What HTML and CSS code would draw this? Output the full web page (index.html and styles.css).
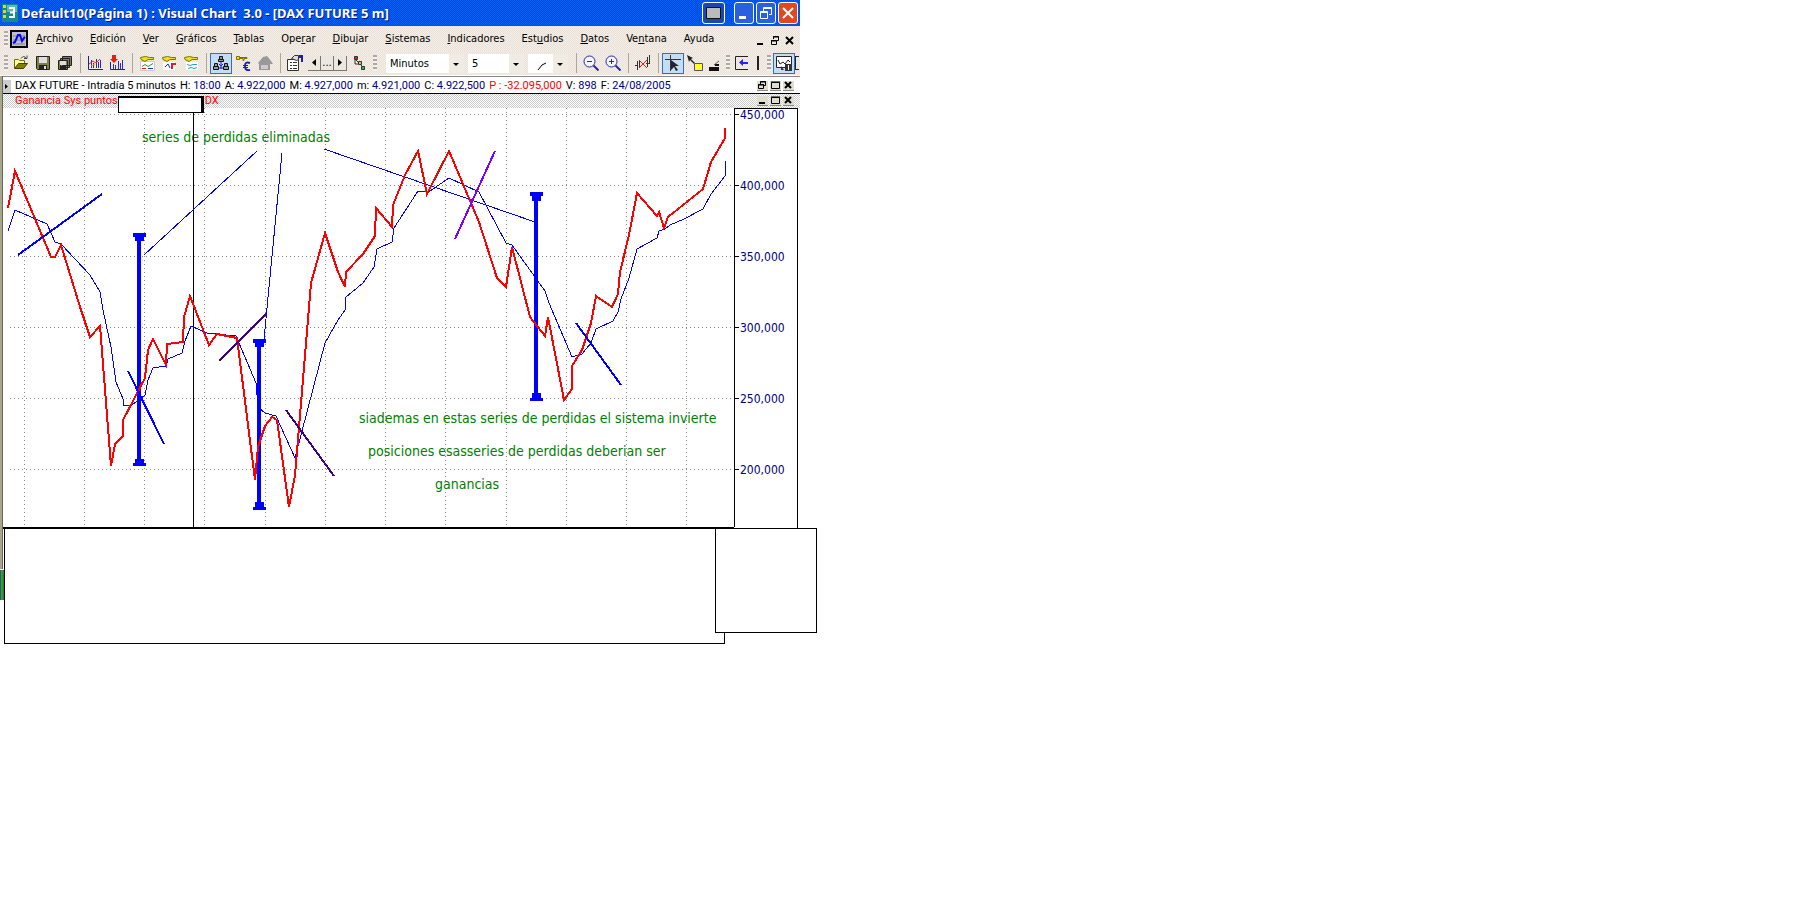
FILE: index.html
```html
<!DOCTYPE html>
<html lang="es">
<head>
<meta charset="utf-8">
<title>Visual Chart 3.0</title>
<link rel="stylesheet" href="styles.css">
</head>
<body>
<main class="desktop">
<section class="window">
  <header class="titlebar">
    <svg class="app-icon" width="16" height="18" viewBox="0 0 16 18"><path fill="#188890" d="M0 0h16v18H0z"/><path fill="#60b8b0" d="M5 1h10v7H5z"/><path fill="#e8d040" d="M1 1h3v3H1zM1 6h3v3H1zM1 11h3v3H1z"/><path fill="none" stroke="#fff" stroke-width="2" d="M7 4h5v9H7M8 8.500h4"/></svg>
    <h1 class="title">Default10(Página 1) : Visual Chart  3.0 - [DAX FUTURE 5 m]</h1>
    <button class="cap cap-extra" aria-label="Monitor"><svg width="21" height="20"><path fill="#bbb" stroke="#111" d="M3.500 4.500h14v11h-14z"/></svg></button>
    <button class="cap" aria-label="Minimizar"><svg width="18" height="20"><path fill="#fff" d="M4 13h7v3H4z"/></svg></button>
    <button class="cap" aria-label="Restaurar"><svg width="18" height="20"><path fill="none" stroke="#fff" d="M6.500 8V4.500h8v7H12M6 5.500h9"/><path fill="none" stroke="#fff" d="M3.500 8.500h7v7h-7zM3 9.500h8"/></svg></button>
    <button class="cap cap-close" aria-label="Cerrar"><svg width="18" height="20"><path stroke="#fff" stroke-width="2" d="M4 5l10 10M14 5L4 15"/></svg></button>
  </header>

  <nav class="menubar">
    <i class="grip"></i>
    <svg class="doc-icon" width="18" height="18" viewBox="0 0 18 18"><path fill="#bdbdd0" stroke="#000" stroke-width="2" d="M1 1h16v16H1z"/><path fill="none" stroke="#808090" d="M3 6h12M3 10h12M3 14h12"/><path fill="none" stroke="#00f" stroke-width="2" d="M3 13l2-1 3-7 2 0 2 6 2-3 1-1"/></svg>
    <button><u>A</u>rchivo</button><button><u>E</u>dición</button><button><u>V</u>er</button><button><u>G</u>ráficos</button><button><u>T</u>ablas</button><button>Ope<u>r</u>ar</button><button><u>D</u>ibujar</button><button><u>S</u>istemas</button><button><u>I</u>ndicadores</button><button>Est<u>u</u>dios</button><button><u>D</u>atos</button><button>Ve<u>n</u>tana</button><button>Ayuda</button>
    <span class="mdi">
      <button aria-label="Minimizar documento"><svg width="12" height="12"><path d="M3 8h6v2H3z"/></svg></button>
      <button aria-label="Restaurar documento"><svg width="12" height="12"><path fill="none" stroke="#000" d="M4.500 4V1.500h5v4H8M4 2h6M2.500 5.500h5v4h-5zM2 6h6"/></svg></button>
      <button aria-label="Cerrar documento"><svg width="12" height="12"><path stroke="#000" stroke-width="2" d="M2 2l7 7M9 2L2 9"/></svg></button>
    </span>
  </nav>

  <div class="toolbar">
    <i class="grip"></i>
    <button class="tool" aria-label="Abrir"><svg width="16" height="16"><path fill="#ffff90" stroke="#707000" d="M1.500 13V4.500h4l1 1h5V8"/><path fill="#808000" stroke="#404000" d="M1.500 13.500l4-5h9l-4 5z"/><path fill="none" stroke="#444" d="M8 3.500q3-4 5 0M11 3.500h3v-3"/></svg></button>
    <button class="tool" aria-label="Guardar"><svg width="16" height="16"><path fill="#808040" stroke="#222" d="M1.500 1.500h13v13h-12l-1-1z"/><path fill="#ddd" d="M4 2h8v6H4z"/><path fill="#222" d="M4 10h8v4H4z"/><path fill="#ddd" d="M9 11h2v3H9z"/></svg></button>
    <button class="tool" aria-label="Guardar todo"><svg width="16" height="16"><path fill="#808040" stroke="#222" d="M5.500 1.500h9v9h-9zM3.500 3.500h9v9h-9zM1.500 5.500h9v9h-9z"/><path fill="#ddd" d="M3 6h6v4H3z"/><path fill="#222" d="M3 11h6v3H3z"/></svg></button>
    <i class="sep"></i>
    <button class="tool" aria-label="Gráfico"><svg width="16" height="16"><path fill="none" stroke="#2020a0" d="M1.500 1v13.500H16"/><path stroke="#2828b0" d="M4.500 5v8M6.500 8v5M9.500 4v9M11.500 7v6M13.500 5v8"/><path fill="none" stroke="#e03020" d="M2 9l4-3 3 2 4-4"/><path stroke="#e0a020" d="M4 11l4-2"/></svg></button>
    <button class="tool" aria-label="Nuevo gráfico"><svg width="16" height="16"><path fill="none" stroke="#2020a0" d="M1.500 7v7.500H16"/><path stroke="#3030c0" d="M4.500 9v5M6.500 10v4M9.500 6v8M11.500 8v6M13.500 5v9"/><path fill="#e02010" d="M3 0h4v4h2L5 8 1 4h2z"/></svg></button>
    <i class="sep"></i>
    <button class="tool" aria-label="Sistema"><svg width="16" height="16"><path fill="#fff" stroke="#ccc" d="M1.500 6.500h14v9h-14z"/><path fill="#f0e020" stroke="#777700" d="M1.500 2.500l5-1 4 1h4v2H9l-3 2-4-2z"/><path fill="none" stroke="#20a020" d="M3 11.500l3-2 3 2 5-3"/><path stroke="#22f" d="M9 13.500h5"/><path stroke="#e02020" d="M3 13.500h4"/></svg></button>
    <button class="tool" aria-label="Estrategia"><svg width="16" height="16"><path fill="#fff" d="M2 7h12v8H2z"/><path fill="#f0e020" stroke="#777700" d="M1.500 2.500l5-1 4 1h4v2H9l-3 2-4-2z"/><path fill="none" stroke="#22f" d="M4 12l3-3 2 4"/><path fill="none" stroke="#e02020" stroke-width="2" d="M11 14V9h4"/></svg></button>
    <button class="tool" aria-label="Indicador"><svg width="16" height="16"><path fill="#fff" d="M3 7h12v8H3z"/><path fill="#f0e020" stroke="#777700" d="M1.500 2.500l5-1 4 1h4v2H9l-3 2-4-2z"/><path fill="none" stroke="#20a0d0" d="M4 9.500l3 1 3-1 4 0M5 13.500l3-1 3 1 3-1"/></svg></button>
    <i class="sep"></i>
    <button class="tool on" aria-label="Organizar"><svg width="16" height="16"><g fill="#999" stroke="#111"><path d="M6.500 1.500h3v3h-3zM5.500 6.500v-2h5v2zM1.500 8.500h3v3h-3zM.5 14.500v-3h5v3zM11.500 8.500h3v3h-3zM10.500 14.500v-3h5v3z"/></g><path stroke="#22c" fill="none" d="M8 7v7M6 9l2 2 2-2M6 13h4"/></svg></button>
    <button class="tool" aria-label="Comisiones"><svg width="16" height="16"><path fill="#f0e020" stroke="#807000" d="M1.500 1.500h3v3h-3zM5 2.500h7v1H9v2H8v-2H5z"/><path fill="none" stroke="#2020b0" stroke-width="2" d="M15 8q-5-2-5 3t5 4"/><path stroke="#2020b0" d="M8 10.500h5M8 12.500h5"/></svg></button>
    <button class="tool" aria-label="Importar"><svg width="16" height="16"><path fill="#999" d="M1 8l5-6 4-1 4 5 2 3h-3v6H2V9z"/><path fill="#ccc" d="M4 10h7v4H4z"/></svg></button>
    <i class="sep"></i>
    <button class="tool" aria-label="Propiedades"><svg width="16" height="16"><path fill="#fff" stroke="#333" d="M.5 4.500h11v11H.5zM3 7.500h2M6 7.500h4M3 10.500h2M6 10.500h4M3 13.500h2M6 13.500h4"/><path fill="#ddd" stroke="#333" d="M4.500 3.500l3-3h4v4l-2 1z"/><path fill="#2020b0" d="M12 0h4v7h-2V3h-2z"/></svg></button>
    <span class="pager"><button aria-label="Anterior"><svg width="12" height="12"><path d="M8 2v7L4 5.500z"/></svg></button><button>...</button><button aria-label="Siguiente"><svg width="12" height="12"><path d="M4 2v7l4-3.500z"/></svg></button></span>
    <button class="tool" aria-label="Conexión"><svg width="16" height="16"><path stroke="#333" d="M3 4l9 9M3 5v4h3" fill="none"/><path fill="#e02020" stroke="#333" d="M2.500 1.500h3v3h-3z"/><path fill="#e0c020" stroke="#333" d="M6.500 6.500h3v3h-3z"/><path fill="#20c040" stroke="#333" d="M9.500 11.500h3v3h-3z"/></svg></button>
    <i class="grip"></i>
    <span class="combo combo-unit"><select aria-label="Unidad"><option>Minutos</option></select></span>
    <span class="combo combo-num"><select aria-label="Periodo"><option>5</option></select></span>
    <span class="combo combo-line"><select aria-label="Línea"><option></option></select><svg width="10" height="10"><path fill="none" stroke="#000" d="M1 9l4-5 4-2"/></svg></span>
    <i class="sep"></i>
    <button class="tool" aria-label="Alejar"><svg width="16" height="16"><circle cx="6.500" cy="6.500" r="5.500" fill="#f4f4ff" stroke="#2828a0"/><path stroke="#2828a0" d="M4 6.500h5"/><path stroke="#2828a0" stroke-width="2" d="M10.500 10.500l5 5"/></svg></button>
    <button class="tool" aria-label="Acercar"><svg width="16" height="16"><circle cx="6.500" cy="6.500" r="5.500" fill="#f4f4ff" stroke="#2828a0"/><path stroke="#2828a0" d="M4 6.500h5M6.500 4v5"/><path stroke="#2828a0" stroke-width="2" d="M10.500 10.500l5 5"/></svg></button>
    <i class="sep"></i>
    <button class="tool" aria-label="Borrar"><svg width="16" height="16"><path stroke="#333" d="M2.500 6v9M4.500 5v8M0 10.500h3M12.500 2v10M14.500 0v9M11 8.500h3"/><path stroke="#e02020" d="M4 5l8 8M12 5l-8 8"/></svg></button>
    <i class="sep"></i>
    <button class="tool on" aria-label="Cursor"><svg width="16" height="16"><path stroke="#333" d="M0 4.500h16M5.500 0v16"/><path fill="#223" d="M6 5l8 6h-4l3 4-2 1-2-4-3 3z"/></svg></button>
    <button class="tool" aria-label="Seleccionar"><svg width="16" height="16"><path fill="#222" d="M0 0l6 3-2 1 4 4-1 1-4-4-1 2z"/><path fill="#ff3" stroke="#555" d="M7.500 8.500h8v7h-8z"/></svg></button>
    <button class="tool tool-short" aria-label="Grosor"><svg width="16" height="16"><path fill="#111" d="M2 12h10v4H2zM8 9h4v2H8z"/><path stroke="#555" d="M7 10l5-4"/></svg></button>
    <i class="grip"></i>
    <button class="tool tool-short" aria-label="Desplazar"><svg width="16" height="16"><path fill="none" stroke="#222" d="M15 1.500H2.500v13H15"/><path fill="#22f" d="M6 7.500L10 4v3h5v2h-5v2z"/></svg></button>
    <button class="tool tool-narrow" aria-label="Límite"><svg width="4" height="16"><path fill="#222" d="M1 1h2v14H1z"/></svg></button>
    <i class="grip"></i>
    <button class="tool on" aria-label="Panel"><svg width="16" height="16"><path fill="#fff" stroke="#222" d="M.5 1.500h15v11H.5z"/><path fill="none" stroke="#222" d="M2 5l2 4 3-2 2 2 3-4 2 2"/><path fill="#333" d="M9 9h7v7H9zM5 11l3 4H5z"/><path stroke="#fff" d="M12.500 10v5"/></svg></button>
    <i class="clip"></i>
  </div>

  <div class="infobar">
    <button class="expand" aria-label="Expandir"><svg width="8" height="13"><path d="M3 4v5l3-2.500z"/></svg></button>
    <p class="quote"><span>DAX FUTURE - Intradía 5 minutos</span><span>H: <b>18:00</b></span><span>A: <b>4.922,000</b></span><span>M: <b>4.927,000</b></span><span>m: <b>4.921,000</b></span><span>C: <b>4.922,500</b></span><span class="loss">P : -32.095,000</span><span>V: <b>898</b></span><span>F: <b>24/08/2005</b></span></p>
    <span class="mini"><button aria-label="Restaurar"><svg width="11" height="9"><path fill="none" stroke="#000" d="M3.500 3V.5h5v4H7M3 1h6M1.500 3.500h5v4h-5zM1 4h6"/></svg></button><button aria-label="Maximizar"><svg width="11" height="9"><path fill="none" stroke="#000" d="M1.500 1.500h8v6h-8zM1 1h9"/></svg></button><button aria-label="Cerrar"><svg width="11" height="9"><path stroke="#000" stroke-width="2" d="M2 1l6 6M8 1L2 7"/></svg></button></span>
  </div>

  <div class="legend">
    <span>Ganancia Sys puntos</span><span class="mask"></span><span>DX</span>
    <span class="mini"><button aria-label="Minimizar"><svg width="11" height="9"><path d="M2 6h6v2H2z"/></svg></button><button aria-label="Maximizar"><svg width="11" height="9"><path fill="none" stroke="#000" d="M1.500 1.500h8v6h-8zM1 1h9"/></svg></button><button aria-label="Cerrar"><svg width="11" height="9"><path stroke="#000" stroke-width="2" d="M2 1l6 6M8 1L2 7"/></svg></button></span>
  </div>

  <svg class="chart" viewBox="0 108 800 421" role="img" aria-label="Ganancia del sistema">
    <g class="grid">
      <path d="M10 114.500H734M10 185.500H734M10 256.500H734M10 327.500H734M10 398.500H734M10 469.500H734"/>
      <path d="M24.500 108V526M84.500 108V526M144.500 108V526M204.500 108V526M265.500 108V526M325.500 108V526M385.500 108V526M445.500 108V526M506.500 108V526M566.500 108V526M626.500 108V526M686.500 108V526"/>
    </g>
    <path class="frame" d="M734.500 527V108.500H797.500V529M735 114.500h4M735 185.500h4M735 256.500h4M735 327.500h4M735 398.500h4M735 469.500h4"/>
    <path class="base" d="M2 528H734"/>
    <g class="axis"><text x="740" y="119">450,000</text><text x="740" y="190">400,000</text><text x="740" y="261">350,000</text><text x="740" y="332">300,000</text><text x="740" y="403">250,000</text><text x="740" y="474">200,000</text></g>
    <g class="note"><text x="142" y="142">series de perdidas eliminadas</text><text x="359" y="423">siademas en estas series de perdidas el sistema invierte</text><text x="368" y="456">posiciones esasseries de perdidas deberian ser</text><text x="435" y="489">ganancias</text></g>
    <path class="cursor" d="M193.500 108V527"/>
    <polyline class="avg" points="8,231 15,210 47,224 55,242 61,244 90,275 100,292 103,310 111,347 116,382 123,399 124,406 132,405 145,395 148,380 153,368 166,366 168,359 182,353 185,341 191,326 207,333 236,336 256,383 258,407 265,413 276,416 295,458 325,343 338,320 345,310 346,297 363,283 374,267 377,249 392,242 394,228 418,191 430,191 449,178 479,192 506,243 512,245 545,291 549,303 572,357 582,354 591,343 596,329 613,321 618,312 621,299 629,278 637,249 657,238 659,231 665,229 670,225 684,219 703,209 711,194 725,176 725,161"/>
    <path class="thin" d="M144 255L257 151M282 153L267 308L264 340M324 149L535 222"/>
    <g class="range"><path d="M137 237h4v226h-4zM133 233h13v4h-2v4h-9v-4h-2zM135 459h9v4h2v3h-13v-3h2z"/><path d="M257 343h4v164h-4zM253 339h13v4h-2v4h-9v-4h-2zM255 502h9v5h2v3h-13v-3h2z"/><path d="M534 196h4v201h-4zM530 192h13v4h-2v5h-9v-5h-2zM532 393h9v5h2v3h-13v-3h2z"/></g>
    <polyline class="gain" points="8,208 15,171 51,257 55,257 61,245 81,310 90,337 100,326 111,466 115,444 123,436 123,420 145,378 148,350 153,339 166,365 167,344 183,342 184,317 190,296 209,345 217,334 237,338 255,480 258,447 265,426 272,417 277,420 289,507 295,475 311,283 325,233 338,272 345,287 346,272 363,254 375,236 376,208 392,227 393,205 405,175 418,151 427,194 449,151 479,222 497,278 506,287 512,247 530,317 545,336 548,317 564,400 572,389 572,366 582,350 591,323 596,296 612,307 618,294 620,272 629,235 637,193 657,216 659,212 664,228 668,217 703,189 711,162 725,138 725,128"/>
    <g class="trend"><path d="M18 255L102 194M128 371L164 444M576 323L621 385"/><path class="dark" d="M219 361L266 314M286 410L334 476"/><path class="violet" d="M455 239L495 151"/></g>
  </svg>
</section>

<section class="lower">
  <i class="edge"></i>
  <div class="panel panel-main"></div>
  <div class="panel panel-side"></div>
</section>
</main>
</body>
</html>
```
FILE: styles.css
```css
* { box-sizing: border-box; }
body { margin: 0; background: #fff; font-family: "DejaVu Sans Condensed", "Noto Sans", sans-serif; font-size: 12px; color: #000; }
button { margin: 0; padding: 0; border: 0; background: none; font: inherit; color: inherit; }
svg { display: block; }
.window { max-width: 800px; position: relative; }
.window::before { content: ""; position: absolute; left: 0; top: 76px; bottom: -40px; width: 2px; background: #a8a888; border-right: 1px solid #666; }

.titlebar { display: flex; align-items: center; height: 26px; padding: 0 2px 0 2px; gap: 2px; background: repeating-conic-gradient(#0048d8 0 25%, #0060f8 0 50%) 0 0 / 2px 2px; }
.title { flex: 1; margin: 0 0 0 1px; font: bold 13px "Noto Sans", sans-serif; color: #fff; white-space: pre; text-shadow: 1px 1px #002080; }
.cap { width: 20px; height: 22px; display: grid; place-items: center; border: 1px solid #fff; border-radius: 3px; background: #2860e0; }
.cap-extra { width: 23px; margin-right: 7px; background: #1848b0; }
.cap-close { background: #e04820; }

.menubar, .toolbar { display: flex; align-items: center; height: 25px; background: repeating-conic-gradient(#f6f0e0 0 25%, #e8e0e0 0 50%) 0 0 / 2px 2px; }
.menubar > *, .toolbar > * { flex: none; }
.grip { width: 4px; height: 16px; margin: 0 2px; background: repeating-linear-gradient(#aaa 0 2px, #f4f0e8 2px 4px); }
.menubar { gap: 17px; padding: 0 4px 0 2px; font-size: 11px; }
.menubar .doc-icon { margin: 0 -9px 0 -17px; }
.mdi { display: flex; gap: 3px; margin-left: auto; padding-top: 4px; }

.toolbar { height: 24px; margin-bottom: 1px; padding-left: 2px; overflow: hidden; font-size: 11px; }
.tool { width: 22px; height: 21px; display: grid; place-items: center; }
.tool.on { border: 1px solid #3070c0; background: #c4dcf4; }
.tool-short { width: 18px; }
.tool-narrow { width: 15px; }
.sep { width: 8px; height: 20px; background: linear-gradient(90deg, transparent 4px, #aca899 4px 5px, transparent 5px); }
.pager { display: flex; margin: 0 2px; }
.pager button { width: 13px; height: 15px; display: grid; place-items: center; line-height: 10px; border-right: 1px solid #777; border-bottom: 1px solid #777; background: #ece8e0; }
.combo { position: relative; display: block; height: 19px; margin-right: 4px; background: #fff; }
.combo::after { content: ""; position: absolute; right: 5px; top: 9px; border: 3px solid transparent; border-top-color: #000; border-bottom: 0; pointer-events: none; }
.combo select { appearance: none; width: 100%; height: 100%; padding: 0 14px 0 4px; border: 0; background: linear-gradient(#f0ece4, #f0ece4) right / 15px 100% no-repeat; font: inherit; color: inherit; }
.combo svg { position: absolute; left: 9px; top: 7px; }
.combo-unit { width: 78px; margin-left: 7px; }
.combo-num { width: 56px; }
.combo-line { width: 40px; }
.clip { width: 4px; height: 14px; border: 1px solid #222; border-right: 0; }

.infobar, .legend { display: flex; align-items: center; margin-left: 2px; padding-right: 6px; font: 11px/16px Roboto, sans-serif; white-space: nowrap; }
.infobar { height: 18px; padding-top: 2px; border-top: 1px solid #888; border-bottom: 1px solid #000; }
.expand { width: 9px; height: 13px; background: #ccc; }
.quote { display: flex; flex: 1; gap: 4px; margin: 0 0 0 4px; }
.quote b { font-weight: normal; color: #000080; }
.quote .loss { color: #f00; }
.mini { display: flex; gap: 2px; margin-left: auto; }
.mini button { width: 11px; height: 10px; background: #e0ddd0; border-bottom: 1px solid #888; }
.legend { height: 14px; padding-left: 13px; color: #f00; background: repeating-conic-gradient(#fff 0 25%, #ccc 0 50%) 0 0 / 2px 2px; }
.mask { position: relative; z-index: 1; width: 86px; height: 17px; margin: 6px 1px 0 0; border: solid #000; border-width: 2px 3px 1px 1px; background: #fff; }

.chart { width: 100%; height: auto; }
.chart path, .chart polyline { shape-rendering: crispEdges; fill: none; }
.grid path { stroke: #888; stroke-dasharray: 1 3; }
.chart .frame, .chart .cursor { stroke: #000; }
.chart .base { stroke: #000; stroke-width: 2; }
.axis { font-size: 12px; fill: #000080; }
.note { font-size: 14px; fill: #008000; }
.chart .avg, .chart .thin { stroke: #00f; }
.chart .range path { fill: #00f; }
.chart .gain { stroke: #f00; stroke-width: 2; }
.trend path { stroke: #00f; stroke-width: 2; }
.trend .dark { stroke: #400080; }
.trend .violet { stroke: #8000ff; }

.lower { display: flex; align-items: flex-start; max-width: 817px; margin-top: -1px; }
.edge { width: 4px; height: 30px; margin-top: 42px; background: linear-gradient(90deg, #206060 1px, #50a050 1px, #188018); }
.panel { position: relative; background: #fff; border: 1px solid #000; }
.panel-main { flex: 1; height: 116px; }
.panel-side { width: 102px; height: 105px; margin-left: -10px; }
```
